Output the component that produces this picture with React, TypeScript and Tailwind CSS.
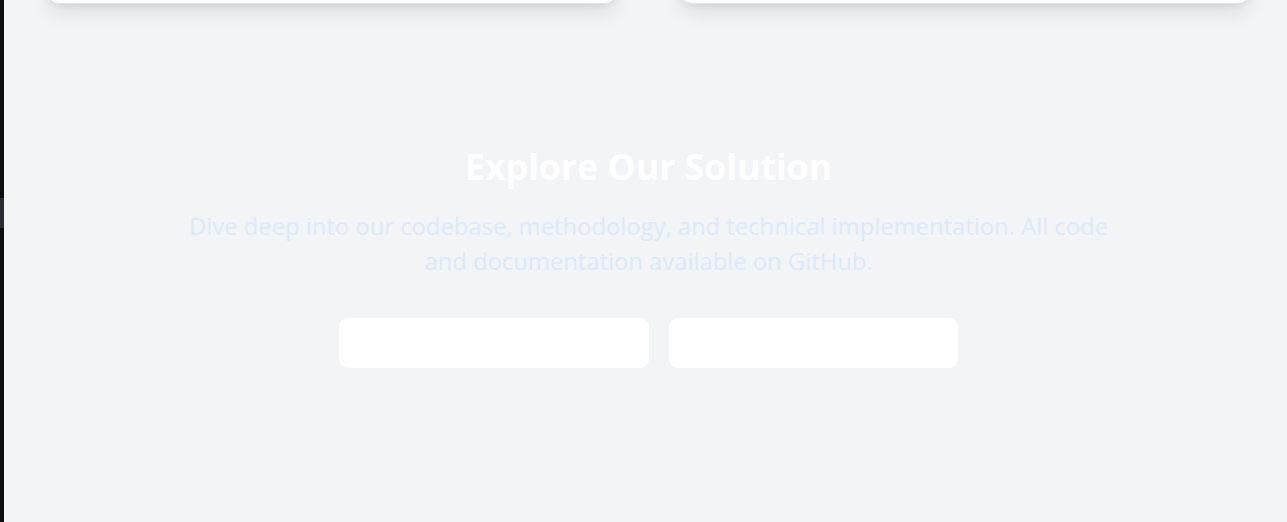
import { ReactNode } from 'react';

const Card = ({ children }: { children?: ReactNode }) => {
  return (
    <div className="w-[572px] h-[200px] bg-white rounded-b-[13px] border border-[#dfe5ee] shadow-[0_10px_22px_-4px_rgba(0,0,0,0.12),0_4px_8px_-4px_rgba(0,0,0,0.08)]">
      {children}
    </div>
  );
};

const App = () => {
  return (
    <div className="flex h-[522px] w-full overflow-hidden font-['Open_Sans',sans-serif]">
      {/* window edge */}
      <div className="w-[4px] shrink-0 bg-[#0d0e12] flex flex-col">
        <div className="h-[198px]" />
        <div className="h-[30px] bg-[#2a2b33]" />
      </div>

      <main className="flex-1 bg-[#f3f4f6] pl-[6px] flex flex-col">
        {/* cards from the section above */}
        <div className="flex justify-center gap-[61px] -mt-[196px]">
          <Card />
          <Card />
        </div>

        <section className="flex flex-col items-center text-center mt-[141px]">
          <h2 className="text-[36px] leading-[44px] font-bold text-white tracking-[-0.2px]">
            Explore Our Solution
          </h2>
          <p className="mt-[20px] w-[940px] text-[23.8px] leading-[35px] text-[#dbeafe]">
            Dive deep into our codebase, methodology, and technical implementation. All code and documentation available on GitHub.
          </p>
          <div className="mt-[39px] flex gap-[20px]">
            <a className="w-[310px] h-[50px] rounded-[9px] bg-white text-white flex items-center justify-center text-[18px] font-semibold">
              View Code on GitHub
            </a>
            <a className="w-[289px] h-[50px] rounded-[9px] bg-white text-white flex items-center justify-center text-[18px] font-semibold">
              Read Documentation
            </a>
          </div>
        </section>
      </main>
    </div>
  );
};

export default App;
